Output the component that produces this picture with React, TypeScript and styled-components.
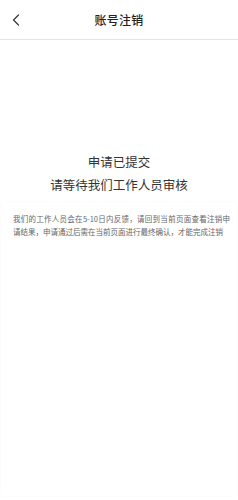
import React from 'react';
import styled, { createGlobalStyle } from 'styled-components';

const GlobalStyle = createGlobalStyle`
    html, body {
        margin: 0;
        padding: 0;
        background: #ffffff;
    }
    body {
        font-family: "Noto Sans CJK SC", "Noto Sans", sans-serif;
    }
`;

const Page = styled.div`
    width: 238px;
    height: 500px;
    display: flex;
    flex-direction: column;
    background: #ffffff;
    overflow: hidden;
`;

const NavBar = styled.header`
    position: relative;
    height: 39px;
    flex-shrink: 0;
    display: flex;
    align-items: center;
    justify-content: center;
    border-bottom: 1px solid #e6e6e6;
`;

const BackButton = styled.button`
    position: absolute;
    left: 8px;
    top: 50%;
    transform: translateY(-50%);
    width: 16px;
    height: 20px;
    padding: 0;
    border: none;
    background: none;
    display: flex;
    align-items: center;
    justify-content: center;
`;

const Title = styled.h1`
    margin: 0;
    font-size: 12px;
    font-weight: 500;
    color: #222222;
    letter-spacing: 0.3px;
`;

const Notice = styled.div`
    padding-top: 110px;
    display: flex;
    flex-direction: column;
    align-items: center;
`;

const NoticeLine = styled.p`
    margin: 0;
    font-size: 12.5px;
    line-height: 23px;
    color: #333333;
    font-weight: 400;
`;

const Card = styled.section`
    flex: 1;
    margin: 6px 1px 4px;
    padding: 10px 7px 0 12px;
    border-radius: 3px;
    box-shadow: 0 0 2px rgba(0, 0, 0, 0.05);
`;

const Body = styled.p`
    margin: 0;
    font-size: 7.5px;
    line-height: 13px;
    color: #666666;
    text-align: justify;
`;

const App: React.FC = () => {
    return (
        <>
            <GlobalStyle />
            <Page>
                <NavBar>
                    <BackButton aria-label="back">
                        <svg width="8" height="12" viewBox="0 0 8 12" fill="none">
                            <path d="M6.5 1 L1.5 6 L6.5 11" stroke="#333" strokeWidth="1.2" strokeLinecap="round" strokeLinejoin="round" />
                        </svg>
                    </BackButton>
                    <Title>账号注销</Title>
                </NavBar>
                <Notice>
                    <NoticeLine>申请已提交</NoticeLine>
                    <NoticeLine>请等待我们工作人员审核</NoticeLine>
                </Notice>
                <Card>
                    <Body>
                        我们的工作人员会在5-10日内反馈，请回到当前页面查看注销申请结果，申请通过后需在当前页面进行最终确认，才能完成注销
                    </Body>
                </Card>
            </Page>
        </>
    );
};

export default App;
